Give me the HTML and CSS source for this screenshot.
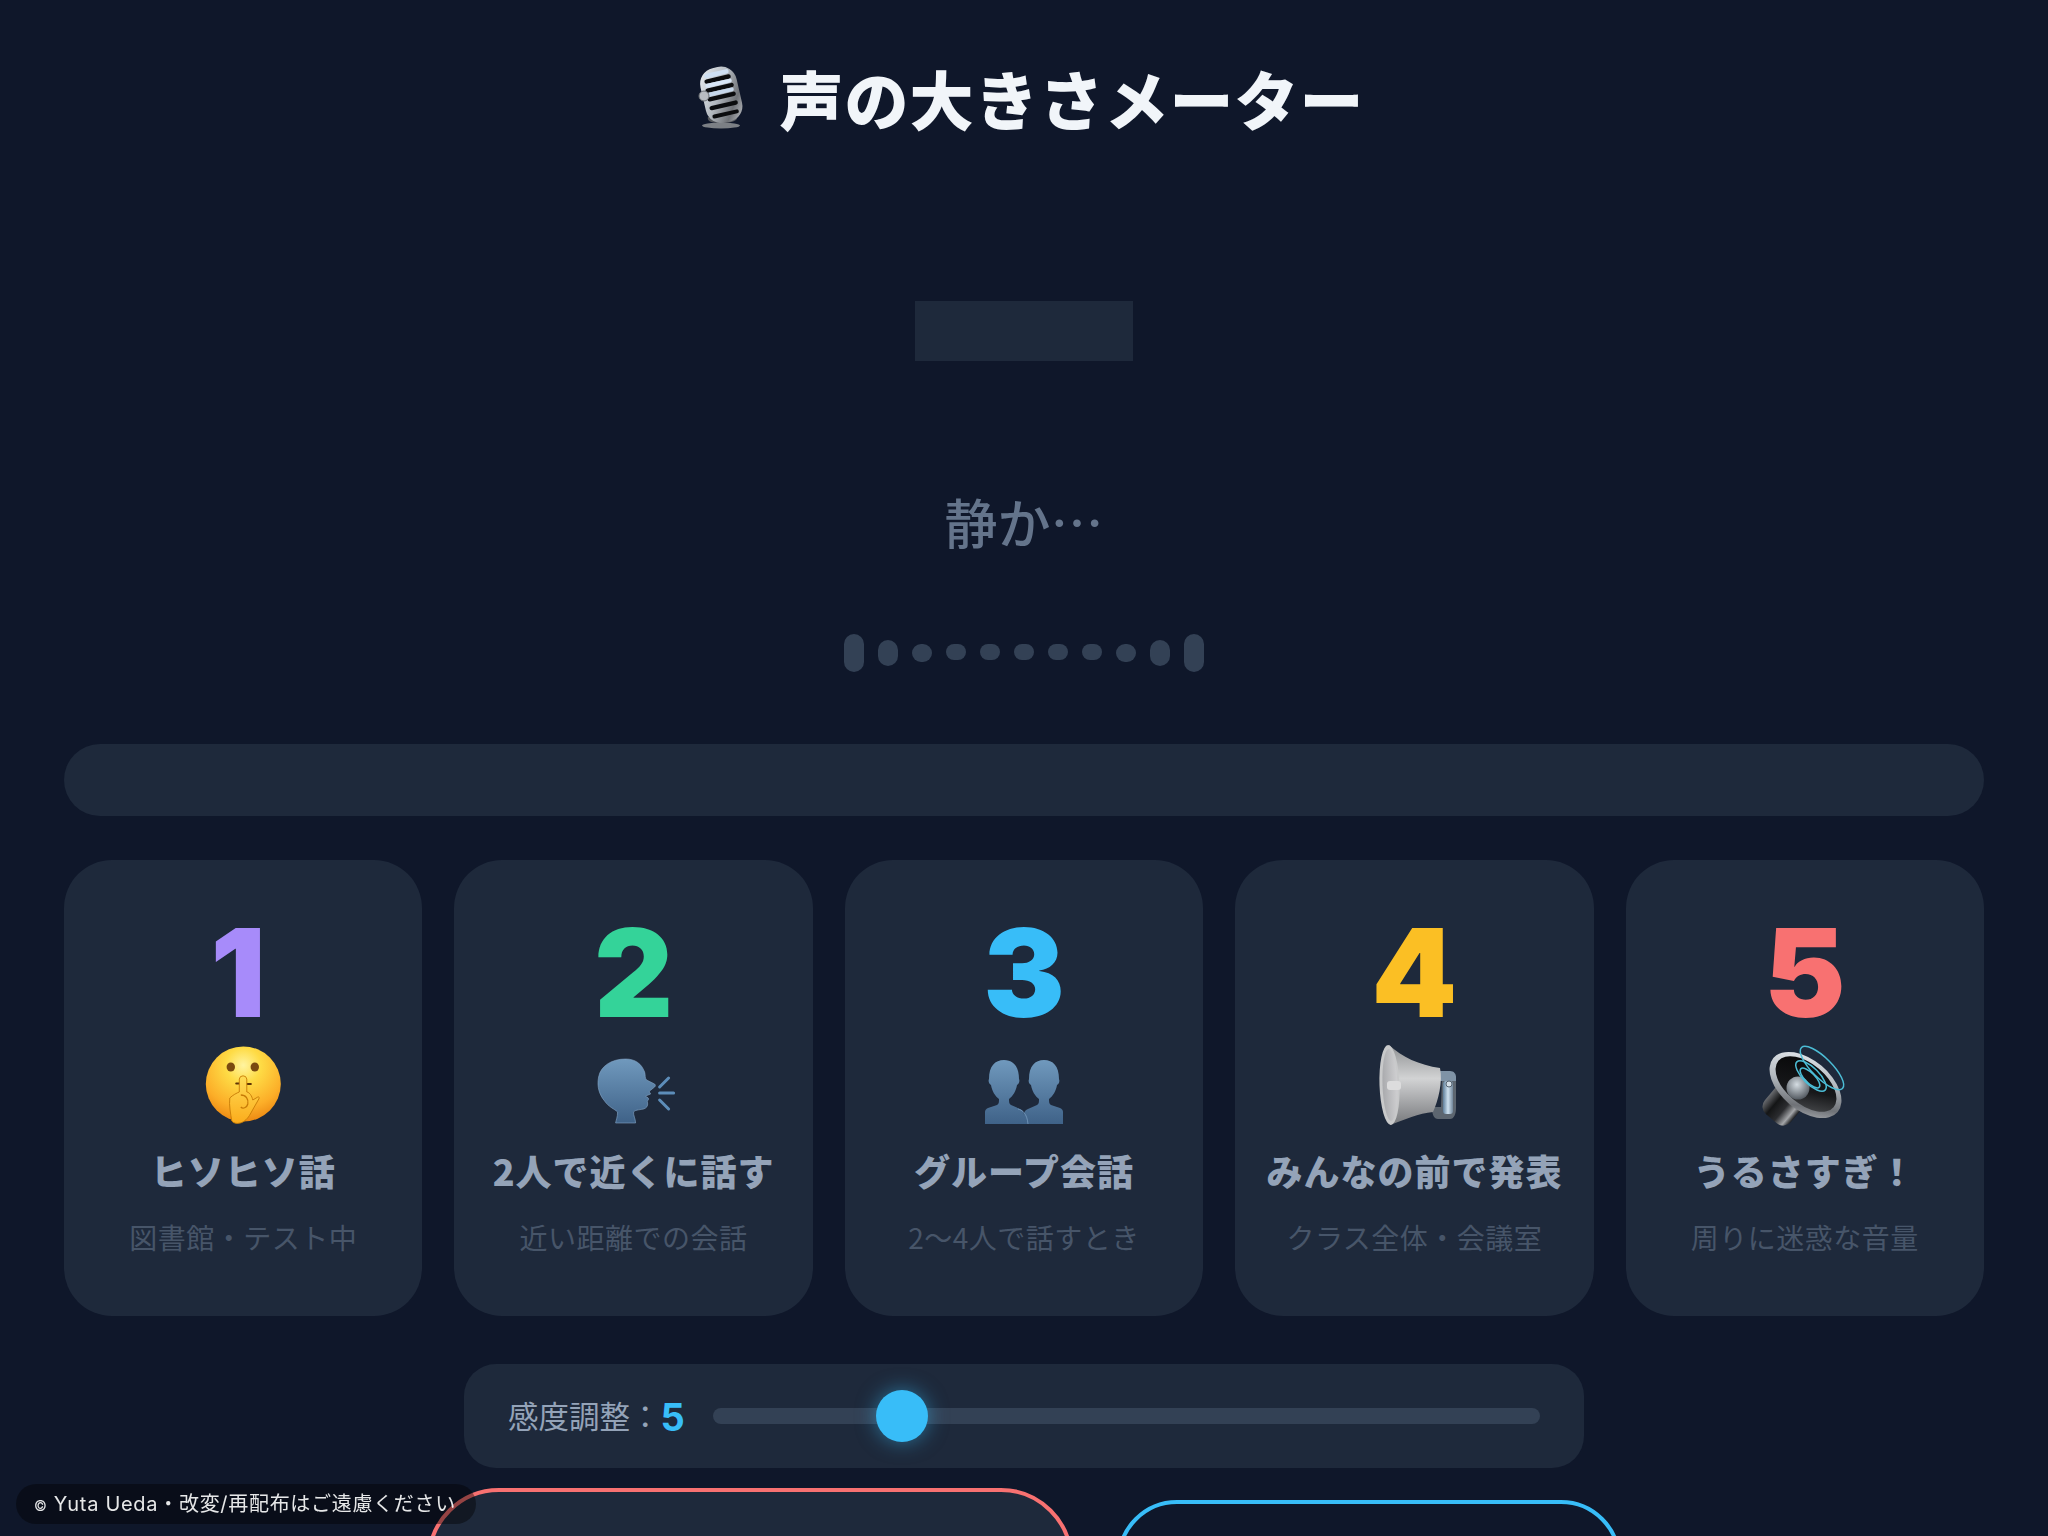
FILE: index.html
```html
<!DOCTYPE html>
<html lang="ja">
<head>
<meta charset="utf-8">
<title>声の大きさメーター</title>
<link rel="stylesheet" href="styles.css">
</head>
<body>
<svg class="defs" width="0" height="0" aria-hidden="true">
  <defs>
    <linearGradient id="silver" x1="0" y1="0" x2="1" y2="1">
      <stop offset="0" stop-color="#eef2f6"/><stop offset=".45" stop-color="#b4bac0"/><stop offset=".75" stop-color="#6f7277"/><stop offset="1" stop-color="#c9ccd0"/>
    </linearGradient>
    <linearGradient id="steel" x1="0" y1="0" x2="0" y2="1">
      <stop offset="0" stop-color="#7099bd"/><stop offset="1" stop-color="#3f6288"/>
    </linearGradient>
    <radialGradient id="face" cx=".5" cy=".25" r=".78">
      <stop offset="0" stop-color="#fff4a0"/><stop offset=".3" stop-color="#fedb45"/><stop offset=".72" stop-color="#fcae28"/><stop offset="1" stop-color="#ea8410"/>
    </radialGradient>
    <linearGradient id="hand" x1="0" y1="0" x2="0" y2="1">
      <stop offset="0" stop-color="#ffdc55"/><stop offset="1" stop-color="#fbac1c"/>
    </linearGradient>
    <linearGradient id="cone" x1="0" y1="0" x2="0" y2="1">
      <stop offset="0" stop-color="#8f9193"/><stop offset=".42" stop-color="#d2d3d4"/><stop offset=".6" stop-color="#b6b7b9"/><stop offset="1" stop-color="#77797c"/>
    </linearGradient>
    <linearGradient id="bell" x1="0" y1="0" x2="1" y2="0">
      <stop offset="0" stop-color="#a9aaad"/><stop offset="1" stop-color="#cfcfd1"/>
    </linearGradient>
    <linearGradient id="handle" x1="0" y1="0" x2="1" y2="0">
      <stop offset="0" stop-color="#5f7f9b"/><stop offset=".5" stop-color="#cfe2f0"/><stop offset="1" stop-color="#71869a"/>
    </linearGradient>
    <linearGradient id="magnet" x1="0" y1="0" x2="1" y2="0">
      <stop offset="0" stop-color="#6a6c70"/><stop offset=".3" stop-color="#141516"/><stop offset=".6" stop-color="#2b2c2f"/><stop offset=".85" stop-color="#a4a6a9"/><stop offset="1" stop-color="#1a1b1d"/>
    </linearGradient>
    <linearGradient id="cavity" x1="0" y1="0" x2="1" y2="1">
      <stop offset="0" stop-color="#050506"/><stop offset=".6" stop-color="#17181a"/><stop offset="1" stop-color="#55575a"/>
    </linearGradient>
    <radialGradient id="dome" cx=".45" cy=".35" r=".7">
      <stop offset="0" stop-color="#d5dde3"/><stop offset="1" stop-color="#4a5057"/>
    </radialGradient>
  </defs>
</svg>

<main class="app">
  <h1 class="title">
    <svg class="title-icon" viewBox="0 0 80 80" aria-hidden="true">
      <ellipse cx="37" cy="68.500" rx="19" ry="3" fill="#7c8085"/>
      <path d="M24 60c-1 3 1 6 13 6s17-3 16-6z" fill="#55585c"/>
      <g transform="rotate(-13 37 39)">
        <rect x="19" y="10" width="37" height="56" rx="16" fill="url(#silver)"/>
        <rect x="24" y="19.500" width="27" height="4.400" rx="2.200" fill="#0b0c0e"/>
        <rect x="23" y="28.500" width="29" height="4.400" rx="2.200" fill="#0b0c0e"/>
        <rect x="23" y="37.500" width="29" height="4.400" rx="2.200" fill="#0b0c0e"/>
        <rect x="23" y="46.500" width="29" height="4.400" rx="2.200" fill="#0b0c0e"/>
        <rect x="24" y="55.500" width="27" height="4" rx="2" fill="#0b0c0e"/>
        <rect x="25" y="14" width="25" height="4.500" rx="2.200" fill="#cfe0f3"/>
        <rect x="24" y="24" width="27" height="4" rx="2" fill="#d8e6f6"/>
        <rect x="24" y="33" width="27" height="4" rx="2" fill="#c6d7ea"/>
      </g>
      <circle cx="20" cy="39" r="5" fill="#b9bdc2" stroke="#6a6e73"/>
    </svg>
    <span>声の大きさメーター</span>
  </h1>

  <div class="display"></div>
  <p class="status">静か…</p>

  <div class="bars">
    <i class="bar bar-l"></i><i class="bar bar-m"></i><i class="bar bar-s"></i><i class="bar bar-xs"></i><i class="bar bar-xs"></i><i class="bar bar-xs"></i><i class="bar bar-xs"></i><i class="bar bar-xs"></i><i class="bar bar-s"></i><i class="bar bar-m"></i><i class="bar bar-l"></i>
  </div>

  <div class="level"></div>

  <section class="cards">
    <article class="card">
      <div class="num num-1">1</div>
      <svg class="emoji" viewBox="-1.800 0 100 100" aria-hidden="true">
        <circle cx="48.500" cy="49" r="37.500" fill="url(#face)"/>
        <ellipse cx="36" cy="32" rx="4.200" ry="4.600" fill="#7a4a10"/>
        <ellipse cx="60" cy="32" rx="4.200" ry="4.600" fill="#7a4a10"/>
        <path d="M41.500 48.500h5M50 49h6" stroke="#5e3408" stroke-width="2.200" stroke-linecap="round"/>
        <path d="M35 63c3-3 7-5 9.500-6V44a3.800 3.800 0 0 1 7.500 0v13c3 .5 5 4 6 8l5-3c1-.5 2 .5 1 2l-8.500 15c-2 4-6 8-10 9-4 1-7 0-8.500-2-1-6-3-16-2-23z" fill="url(#hand)" stroke="#c67a06" stroke-width=".9"/>
        <path d="M46 60c5 0 8 4 7 9-1 4-5 5-7 3" fill="none" stroke="#c67a06" stroke-width="1.300"/>
      </svg>
      <h2 class="label">ヒソヒソ話</h2>
      <p class="desc">図書館・テスト中</p>
    </article>

    <article class="card">
      <div class="num num-2">2</div>
      <svg class="emoji" viewBox="-1.600 0 100 100" aria-hidden="true">
        <path d="M30 88c.5-3 2-6 2-11-3-3-9-5-13-11-5-6-8-14-6-24 2-11 13-18 27-18 10 0 16 5 19 13 1 3 0 6 2 8l8 4c1 1 1 2 0 3l-5 4c-1 1 1 2 1 3l-5 2c-.5 1 3 1 3 3 0 1-2 2-1 4 .5 3-1 5-4 6-5 1-9 1-10 3-.5 3 2 7 2 11z" fill="url(#steel)" stroke="#84a6c8" stroke-width=".6"/>
        <path d="M74 52l9-9M74 58h14M74 65l9 9" stroke="#5d8db9" stroke-width="3" stroke-linecap="round" fill="none"/>
      </svg>
      <h2 class="label">2人で近くに話す</h2>
      <p class="desc">近い距離での会話</p>
    </article>

    <article class="card">
      <div class="num num-3">3</div>
      <svg class="emoji" viewBox="0 0 100 100" aria-hidden="true">
        <path d="M11 89V77c0-2 1-3 3-4l9-3c2-1 2-3 2-6-4-3-7-8-8-14-2-1-3-4-2-6 0-13 6-19 15-19s15 6 15 19c1 2 0 5-2 6-1 6-4 11-8 14 0 3 0 5 2 6l9 4c3 1 4 3 4 6v9z" fill="url(#steel)"/>
        <path d="M11 89V77c0-2 1-3 3-4l9-3c2-1 2-3 2-6-4-3-7-8-8-14-2-1-3-4-2-6 0-13 6-19 15-19s15 6 15 19c1 2 0 5-2 6-1 6-4 11-8 14 0 3 0 5 2 6l9 4c3 1 4 3 4 6v9z" fill="url(#steel)" transform="matrix(-1 0 0 1 100 0)"/>
        <path d="M44 74c4 1 9 4 10 15" fill="none" stroke="#7fa3c5" stroke-width=".7"/>
      </svg>
      <h2 class="label">グループ会話</h2>
      <p class="desc">2〜4人で話すとき</p>
    </article>

    <article class="card">
      <div class="num num-4">4</div>
      <svg class="emoji" viewBox="0 0 100 100" aria-hidden="true">
        <path d="M68 72h9l1-32h8c4 0 6 3 6 7v26c0 6-2 11-6 11H74c-4 0-6-4-6-12z" fill="#5d6670"/>
        <path d="M74 36h12c4 0 6 3 6 6v4H74z" fill="#7f93a6"/>
        <rect x="79" y="46" width="10" height="33" rx="3" fill="url(#handle)"/>
        <circle cx="85" cy="49" r="3" fill="#d4dfe8" stroke="#566471"/>
        <path d="M25 10C38 22 55 30 76 33 79 47 74 66 69 77 55 78 40 85 26 90z" fill="url(#cone)"/>
        <ellipse cx="25.500" cy="50" rx="10" ry="40" fill="#c8c9ca" transform="rotate(-2 25 50)"/>
        <ellipse cx="26" cy="50" rx="7.500" ry="36" fill="url(#bell)" transform="rotate(-2 25 50)"/>
        <rect x="23" y="46" width="14" height="9" rx="3" fill="#dcdcdd"/>
      </svg>
      <h2 class="label">みんなの前で発表</h2>
      <p class="desc">クラス全体・会議室</p>
    </article>

    <article class="card">
      <div class="num num-5">5</div>
      <svg class="emoji" viewBox="0 0 100 100" aria-hidden="true">
        <g transform="rotate(40 28 70)"><rect x="11" y="52" width="34" height="36" rx="10" fill="url(#magnet)"/></g>
        <ellipse cx="50.500" cy="50" rx="42" ry="25" transform="rotate(40 50.500 50)" fill="url(#silver)"/>
        <ellipse cx="51" cy="49" rx="36" ry="20" transform="rotate(40 51 49)" fill="url(#cavity)"/>
        <circle cx="43" cy="53" r="11.500" fill="url(#dome)"/>
        <g fill="none" stroke="#4cbdd6" stroke-width="1.500">
          <ellipse cx="67" cy="33" rx="29" ry="10" transform="rotate(45 67 33)"/>
          <ellipse cx="56" cy="41" rx="20" ry="8" transform="rotate(45 56 41)"/>
          <ellipse cx="55" cy="43" rx="13" ry="5" transform="rotate(45 55 43)"/>
        </g>
      </svg>
      <h2 class="label">うるさすぎ！</h2>
      <p class="desc">周りに迷惑な音量</p>
    </article>
  </section>

  <section class="sensitivity">
    <label class="sens-label" for="sens">感度調整：<b class="sens-value">5</b></label>
    <input class="sens-range" id="sens" type="range" min="1" max="20" value="5">
  </section>

  <div class="buttons">
    <button class="btn btn-start" type="button"></button>
    <button class="btn btn-reset" type="button"></button>
  </div>
</main>

<footer class="copyright"><span class="copy-mark">©</span> Yuta Ueda・改変/再配布はご遠慮ください</footer>
</body>
</html>
```

FILE: styles.css
```css
* { box-sizing: border-box; }

html, body {
  margin: 0;
  height: 100%;
  overflow: hidden;
  background: #0f172a;
}

body {
  font-family: "Inter", "Noto Sans CJK JP", sans-serif;
  color: #f1f5f9;
}

.defs { position: absolute; }

.app {
  display: flex;
  flex-direction: column;
  align-items: center;
  padding: 65px 64px 0;
}

.title {
  display: flex;
  align-items: center;
  gap: 16px;
  margin: 0;
  height: 64px;
  font-family: "Noto Sans CJK JP", sans-serif;
  font-size: 64px;
  font-weight: 900;
  letter-spacing: 1px;
  line-height: 1;
  color: #f1f5f9;
}

.title-icon { width: 80px; height: 80px; flex: none; }

.display {
  width: 218px;
  height: 60px;
  margin-top: 172px;
  background: #1e293b;
}

.status {
  margin: 130px 0 0;
  font-family: "Noto Sans CJK JP", sans-serif;
  font-size: 53px;
  line-height: 60px;
  font-weight: 500;
  color: #64748b;
}

.bars {
  display: flex;
  align-items: center;
  gap: 14px;
  height: 38px;
  margin-top: 83px;
}

.bar { display: block; width: 20px; background: #334155; border-radius: 10px; }
.bar-l { height: 38px; }
.bar-m { height: 26px; }
.bar-s { height: 18px; }
.bar-xs { height: 16px; margin-bottom: 2px; }

.level {
  width: 100%;
  height: 72px;
  margin-top: 72px;
  border-radius: 36px;
  background: #1e293b;
}

.cards {
  display: grid;
  grid-template-columns: repeat(5, 1fr);
  gap: 32px;
  width: 100%;
  margin-top: 44px;
}

.card {
  display: flex;
  flex-direction: column;
  align-items: center;
  height: 456px;
  padding-top: 52px;
  border-radius: 48px;
  background: #1e293b;
  text-align: center;
}

.num {
  font-family: "Inter", sans-serif;
  font-size: 122px;
  line-height: 122px;
  font-weight: 900;
}
.num-1 { color: #a78bfa; margin-right: 10px; }
.num-2 { color: #34d399; }
.num-3 { color: #38bdf8; }
.num-4 { color: #fbbf24; }
.num-5 { color: #f87171; }

.emoji { width: 100px; height: 100px; flex: none; margin-top: 1px; }

.label {
  margin: 13px 0 0;
  font-family: "Noto Sans CJK JP", sans-serif;
  font-size: 36px;
  letter-spacing: 1px;
  line-height: 44px;
  font-weight: 900;
  color: #94a3b8;
}

.desc {
  margin: 27px 0 0;
  font-family: "Noto Sans CJK JP", sans-serif;
  font-size: 28px;
  letter-spacing: 0.500px;
  line-height: 36px;
  font-weight: 400;
  color: #475569;
}

.sensitivity {
  display: flex;
  align-items: center;
  gap: 28px;
  width: 1120px;
  height: 104px;
  margin-top: 48px;
  padding: 0 44px;
  border-radius: 32px;
  background: #1e293b;
}

.sens-label {
  flex: none;
  font-family: "Noto Sans CJK JP", sans-serif;
  font-size: 30.500px;
  color: #94a3b8;
  white-space: nowrap;
}

.sens-value {
  font-family: "Inter", sans-serif;
  font-size: 38px;
  font-weight: 700;
  color: #38bdf8;
  vertical-align: -3px;
}

.sens-range {
  flex: 1;
  min-width: 0;
  height: 16px;
  margin: 0;
  border-radius: 8px;
  background: #334155;
  appearance: none;
  -webkit-appearance: none;
  outline: none;
}

.sens-range::-webkit-slider-thumb {
  width: 52px;
  height: 52px;
  border-radius: 50%;
  background: #38bdf8;
  box-shadow: 0 0 20px rgba(56, 189, 248, 0.5);
  appearance: none;
  -webkit-appearance: none;
}

.buttons {
  display: flex;
  align-items: center;
  justify-content: center;
  gap: 44px;
  margin-top: 20px;
}

.btn {
  padding: 0;
  border-style: solid;
  border-width: 4px;
  flex: none;
}

.btn-start {
  width: 646px;
  height: 144px;
  border-color: #f87171;
  border-radius: 72px;
  background: #1e293b;
}

.btn-reset {
  width: 504px;
  height: 120px;
  border-color: #38bdf8;
  border-radius: 60px;
  background: transparent;
}

.copyright {
  position: fixed;
  left: 16px;
  bottom: 12px;
  height: 40px;
  padding: 0 20px 0 18px;
  border-radius: 20px;
  background: rgba(0, 0, 0, 0.4);
  color: rgba(255, 255, 255, 0.9);
  font-family: "Inter", "Noto Sans CJK JP", sans-serif;
  font-size: 20px;
  letter-spacing: 0.700px;
  line-height: 40px;
  white-space: nowrap;
}

.copy-mark { font-size: 14px; }
```
